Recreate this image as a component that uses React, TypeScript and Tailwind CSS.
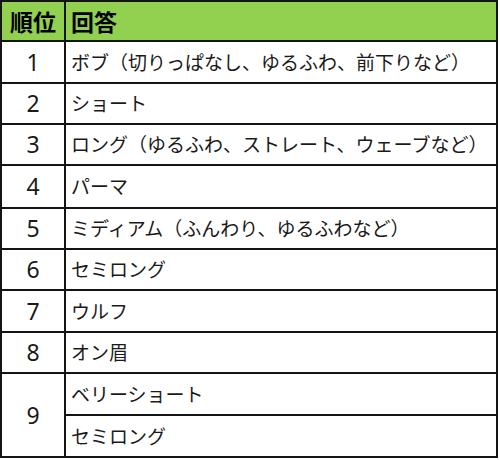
import React from "react";

const rows: { rank: string; h: string; text: string }[] = [
  { rank: "1", h: "h-[42px]", text: "ボブ（切りっぱなし、ゆるふわ、前下りなど）" },
  { rank: "2", h: "h-[41px]", text: "ショート" },
  { rank: "3", h: "h-[41px]", text: "ロング（ゆるふわ、ストレート、ウェーブなど）" },
  { rank: "4", h: "h-[43px]", text: "パーマ" },
  { rank: "5", h: "h-[41px]", text: "ミディアム（ふんわり、ゆるふわなど）" },
  { rank: "6", h: "h-[41px]", text: "セミロング" },
  { rank: "7", h: "h-[42px]", text: "ウルフ" },
  { rank: "8", h: "h-[41px]", text: "オン眉" },
];

function RankCell({ children }: { children: React.ReactNode }) {
  return (
    <div className="w-[64px] shrink-0 border-r-2 border-[#141414] flex items-center justify-center text-[23px] font-['Noto_Sans','Open_Sans',sans-serif]">
      {children}
    </div>
  );
}

export default function App() {
  return (
    <div className="w-[500px] h-[460px] bg-white font-['Noto_Sans_CJK_JP','Noto_Sans',sans-serif]">
      <div className="w-[498px] border-2 border-[#141414] text-[#1a1a1a] overflow-hidden">
        <div className="flex h-[40px] bg-[#92d050] border-b-2 border-[#141414]">
          <div className="w-[64px] shrink-0 border-r-2 border-[#141414] flex items-center justify-center text-[23px] font-bold text-black">
            順位
          </div>
          <div className="flex-1 flex items-center pl-[5px] text-[23px] font-bold text-black">
            回答
          </div>
        </div>
        {rows.map((r) => (
          <div key={r.rank} className={`flex ${r.h} border-b-2 border-[#141414]`}>
            <RankCell>{r.rank}</RankCell>
            <div className="flex-1 min-w-0 flex items-center pl-[5px] text-[19px] whitespace-nowrap">
              {r.text}
            </div>
          </div>
        ))}
        <div className="flex h-[82px]">
          <RankCell>9</RankCell>
          <div className="flex-1 flex flex-col">
            <div className="h-[42px] border-b-2 border-[#141414] flex items-center pl-[5px] text-[19px]">
              ベリーショート
            </div>
            <div className="h-[40px] flex items-center pl-[5px] text-[19px]">
              セミロング
            </div>
          </div>
        </div>
      </div>
    </div>
  );
}
